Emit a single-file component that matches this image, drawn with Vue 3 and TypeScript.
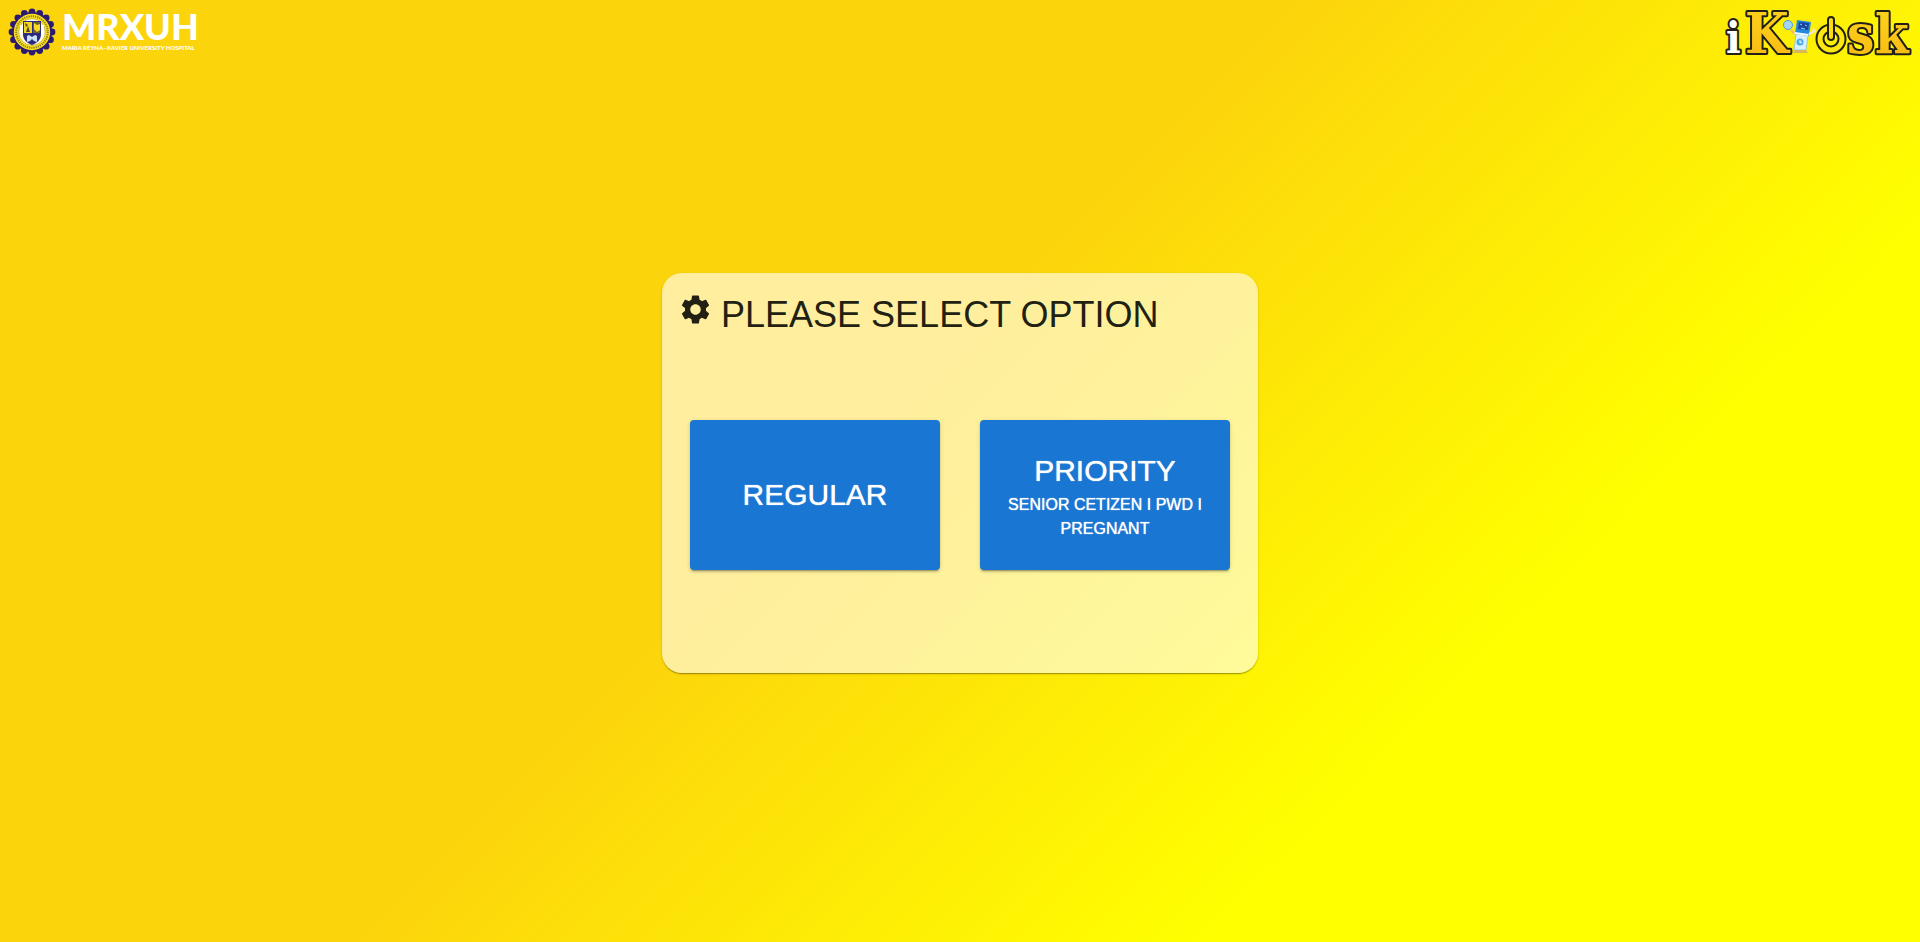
<script setup lang="ts">
interface Option {
  id: string
  title: string
  note?: string
}

const options: Option[] = [
  { id: 'regular', title: 'REGULAR' },
  { id: 'priority', title: 'PRIORITY', note: 'SENIOR CETIZEN I PWD I PREGNANT' },
]

const scallops = Array.from({ length: 16 }, (_, i) => {
  const angle = (i * Math.PI) / 8
  return { x: 24 + 20 * Math.cos(angle), y: 24 + 20 * Math.sin(angle) }
})
</script>

<template>
  <div class="page">
    <header class="header">
      <div class="brand">
        <svg class="seal" viewBox="0 0 48 48" aria-hidden="true">
          <circle v-for="(s, i) in scallops" :key="i" :cx="s.x" :cy="s.y" r="3.4" fill="#2b1a72" />
          <circle cx="24" cy="24" r="20" fill="#2b1a72" />
          <circle cx="24" cy="24" r="18.2" fill="#fbe21a" />
          <circle cx="24" cy="24" r="15.8" fill="none" stroke="#85792a" stroke-width="2" stroke-dasharray="1.2 1" />
          <circle cx="24" cy="24" r="13.4" fill="#fffbe0" stroke="#b3a12a" stroke-width="0.7" />
          <path d="M15 13h18v13c0 6-4 9-9 11-5-2-9-5-9-11z" fill="#2b2a7c" />
          <path d="M16 14h8v11h-8z" fill="#f3d51d" />
          <path d="M25 14h7v11h-7z" fill="#6d6320" />
          <path d="M26 15l3 2 3-1v6l-3 2-3-3z" fill="#f7dc20" />
          <path d="M18 24l2-6 2 6zM17 15l3 2-2 2z" fill="#4b4230" />
          <path d="M12 17h3v10h-3zM33 17h3v10h-3z" fill="#fff" />
          <path d="M19 34v-6l2-1 3 2 3-2 2 1v6l-3-1-2-2-2 2z" fill="#c9e2fa" />
        </svg>
        <div class="brand-text">
          <span class="brand-name">MRXUH</span>
          <span class="brand-sub">MARIA REYNA–XAVIER UNIVERSITY HOSPITAL</span>
        </div>
      </div>

      <svg class="kiosk" viewBox="0 0 190 60" role="img" aria-label="iKiosk">
        <defs>
          <linearGradient id="gold" x1="0" y1="0" x2="0" y2="1">
            <stop offset="0" stop-color="#ffd51c" />
            <stop offset="1" stop-color="#f8b812" />
          </linearGradient>
        </defs>
        <g class="letters">
          <text x="4" y="53" font-size="43" fill="#ffffff">i</text>
          <text x="23" y="53" font-size="56" fill="url(#gold)">K</text>
          <text x="125" y="53" font-size="54" fill="url(#gold)">s</text>
          <text x="153" y="53" font-size="54" fill="url(#gold)">k</text>
        </g>
        <g fill="none" stroke-linecap="round">
          <circle cx="109" cy="39" r="11" stroke="#222016" stroke-width="9" />
          <circle cx="109" cy="39" r="11" stroke="#fde70e" stroke-width="5" />
          <path d="M109 20v17" stroke="#222016" stroke-width="8" />
          <path d="M109 20v17" stroke="#fbdc12" stroke-width="4" />
        </g>
        <g>
          <path d="M69 30l5 5" stroke="#f1b48a" stroke-width="2" />
          <circle cx="66" cy="25" r="4.500" fill="#a4d6f4" stroke="#4a9fdc" />
          <path d="M74 34l12 1-2 15H72z" fill="#d9f0f8" stroke="#75bce5" stroke-width="0.7" />
          <path d="M75 20l14 2-2 14-14-2z" fill="#2489df" />
          <path d="M77 22l10 1-1 7-10-1z" fill="#1a459d" />
          <path d="M78 24l2 1m3 0 2 1m-6 2 4 1" stroke="#8bd2ff" />
          <path d="M73 32l14 2-1 2-14-2z" fill="#eefaff" />
          <circle cx="78" cy="42" r="3.500" fill="#48aceb" />
          <path d="M78 40v3l2-1" fill="none" stroke="#fff" />
          <path d="M87 34l4-2 1-4m-1 4 3-1" fill="none" stroke="#f8e5c8" stroke-width="2" />
          <path d="M70 53l3-3h11l2 3z" fill="#d9b65b" />
        </g>
      </svg>
    </header>

    <main class="main">
      <section class="card" aria-labelledby="card-title">
        <div class="card-head">
          <svg class="gear" viewBox="0 0 24 24" aria-hidden="true">
            <path d="M19.140 12.940c.04-.3.060-.61.060-.94 0-.32-.02-.64-.07-.94l2.030-1.580c.18-.14.230-.41.120-.61l-1.920-3.320c-.12-.22-.37-.29-.59-.22l-2.390.96c-.5-.38-1.030-.7-1.620-.94l-.36-2.540c-.04-.24-.24-.41-.48-.41h-3.840c-.24 0-.43.170-.47.410l-.36 2.540c-.59.240-1.130.570-1.620.940l-2.390-.96c-.22-.08-.47 0-.59.220L2.740 8.870c-.12.210-.08.470.120.610l2.030 1.580c-.05.3-.09.630-.09.940s.020.640.070.940l-2.030 1.580c-.18.140-.23.410-.12.610l1.920 3.320c.12.220.370.290.590.220l2.390-.96c.5.380 1.030.7 1.620.940l.36 2.540c.05.240.240.410.480.410h3.840c.24 0 .440-.17.470-.41l.36-2.540c.59-.24 1.130-.56 1.620-.94l2.390.96c.22.080.470 0 .590-.22l1.920-3.320c.12-.22.070-.47-.12-.61l-2.010-1.580zM12 15.600c-1.980 0-3.600-1.620-3.600-3.600s1.620-3.600 3.600-3.600 3.600 1.620 3.600 3.600-1.620 3.600-3.600 3.600z" />
          </svg>
          <h1 id="card-title" class="title">PLEASE SELECT OPTION</h1>
        </div>
        <div class="options">
          <button v-for="o in options" :key="o.id" type="button" class="option">
            <span class="option-title">{{ o.title }}</span>
            <span v-if="o.note" class="option-note">{{ o.note }}</span>
          </button>
        </div>
      </section>
    </main>
  </div>
</template>

<style>
body {
  margin: 0;
}
</style>

<style scoped>
.page {
  display: flex;
  flex-direction: column;
  box-sizing: border-box;
  min-height: 100vh;
  background: linear-gradient(135deg, #fcd40c 45%, #ffff00 75%);
  font-family: "Liberation Sans", Arial, sans-serif;
}

.header {
  display: flex;
  justify-content: space-between;
  align-items: flex-start;
  height: 64px;
  padding: 0 8px;
}

.brand {
  display: flex;
  gap: 6px;
  padding-top: 8px;
}

.seal {
  width: 48px;
  height: 48px;
}

.brand-text {
  display: flex;
  flex-direction: column;
  color: #fff;
  font-family: Lato, "Open Sans", sans-serif;
  font-weight: 900;
  white-space: nowrap;
}

.brand-name {
  font-size: 36px;
  line-height: 36px;
}

.brand-sub {
  font-size: 6px;
  line-height: 8px;
}

.kiosk {
  width: 190px;
  height: 60px;
  overflow: visible;
}

.letters {
  font-family: "DejaVu Serif Condensed", "DejaVu Serif", serif;
  font-weight: 700;
  stroke: #222016;
  stroke-width: 4;
  stroke-linejoin: round;
  paint-order: stroke;
}

.main {
  flex: 1;
  display: flex;
  align-items: center;
  justify-content: center;
  padding-bottom: 60px;
}

.card {
  box-sizing: border-box;
  display: flex;
  flex-direction: column;
  width: 596px;
  max-width: 100%;
  min-height: 400px;
  padding: 16px;
  border-radius: 20px;
  background: rgba(255, 255, 255, 0.6);
  box-shadow: 0 2px 1px -1px rgba(0, 0, 0, 0.2), 0 1px 1px rgba(0, 0, 0, 0.14), 0 1px 3px rgba(0, 0, 0, 0.12);
}

.card-head {
  display: flex;
  gap: 8px;
  color: #221f13;
}

.gear {
  width: 35px;
  height: 35px;
  margin-top: 3px;
  fill: currentColor;
}

.title {
  margin: 4px 0 0;
  font-size: 36px;
  font-weight: 400;
  line-height: 44px;
}

.options {
  display: flex;
  flex-wrap: wrap;
  gap: 40px;
  margin: 83px 12px 0;
}

.option {
  display: flex;
  flex-direction: column;
  align-items: center;
  justify-content: center;
  width: 250px;
  height: 150px;
  padding: 6px 16px;
  border: 0;
  border-radius: 4px;
  background: #1976d2;
  color: #fff;
  font-family: inherit;
  text-shadow: 0 0 1px #fff;
  cursor: pointer;
  box-shadow: 0 3px 1px -2px rgba(0, 0, 0, 0.2), 0 2px 2px rgba(0, 0, 0, 0.14), 0 1px 5px rgba(0, 0, 0, 0.12);
}

.option-title {
  font-size: 30px;
  line-height: 44px;
}

.option-note {
  font-size: 16px;
  line-height: 24px;
}
</style>
